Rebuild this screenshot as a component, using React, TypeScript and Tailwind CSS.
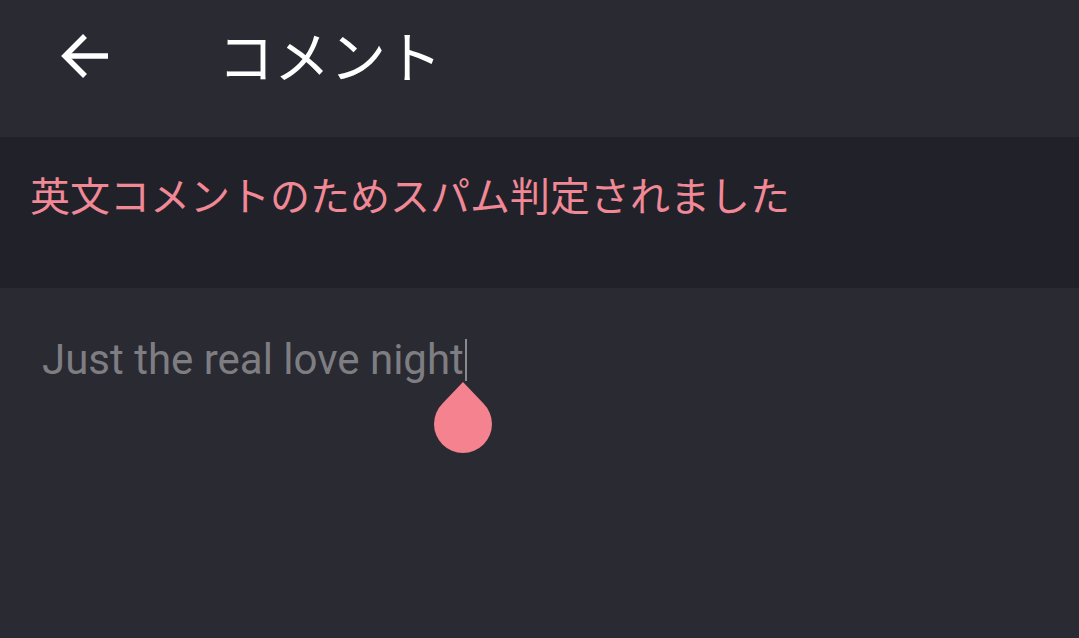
export default function App() {
  return (
    <div className="w-[1079px] h-[638px] bg-[#2a2a33] flex flex-col overflow-hidden" style={{ fontFamily: "Roboto, 'Noto Sans CJK JP', sans-serif" }}>
      {/* top bar */}
      <header className="h-[137px] flex items-center pl-[60px] pb-[26px]">
        <svg width="48" height="48" viewBox="0 0 48 48" fill="none" stroke="white" strokeWidth="5.5">
          <path d="M48 24 H5" />
          <path d="M25 4 L5 24 L25 44" />
        </svg>
        <h1 className="ml-[110px] mt-[6px] text-[56px] leading-none text-white font-normal">コメント</h1>
      </header>

      {/* spam notice */}
      <div className="h-[151px] bg-[#212129] pl-[30px] pt-[37px]">
        <p className="text-[40px] leading-[48px] text-[#f08895]">英文コメントのためスパム判定されました</p>
      </div>

      {/* input */}
      <div className="relative flex-1 pl-[42px] pt-[42px]">
        <div className="flex items-center">
          <span className="text-[42px] leading-[60px] text-[#7e7e82]">Just the real love night</span>
          <span className="w-[2px] h-[42px] bg-[#8a8a8e] ml-[1px]" />
        </div>
        <svg className="absolute left-[432px] top-[94px]" width="62" height="74" viewBox="0 0 62 74">
          <path d="M31 0 L51.5 21.5 A29 29 0 1 1 10.5 21.5 Z" fill="#f4838f" />
        </svg>
      </div>
    </div>
  )
}
